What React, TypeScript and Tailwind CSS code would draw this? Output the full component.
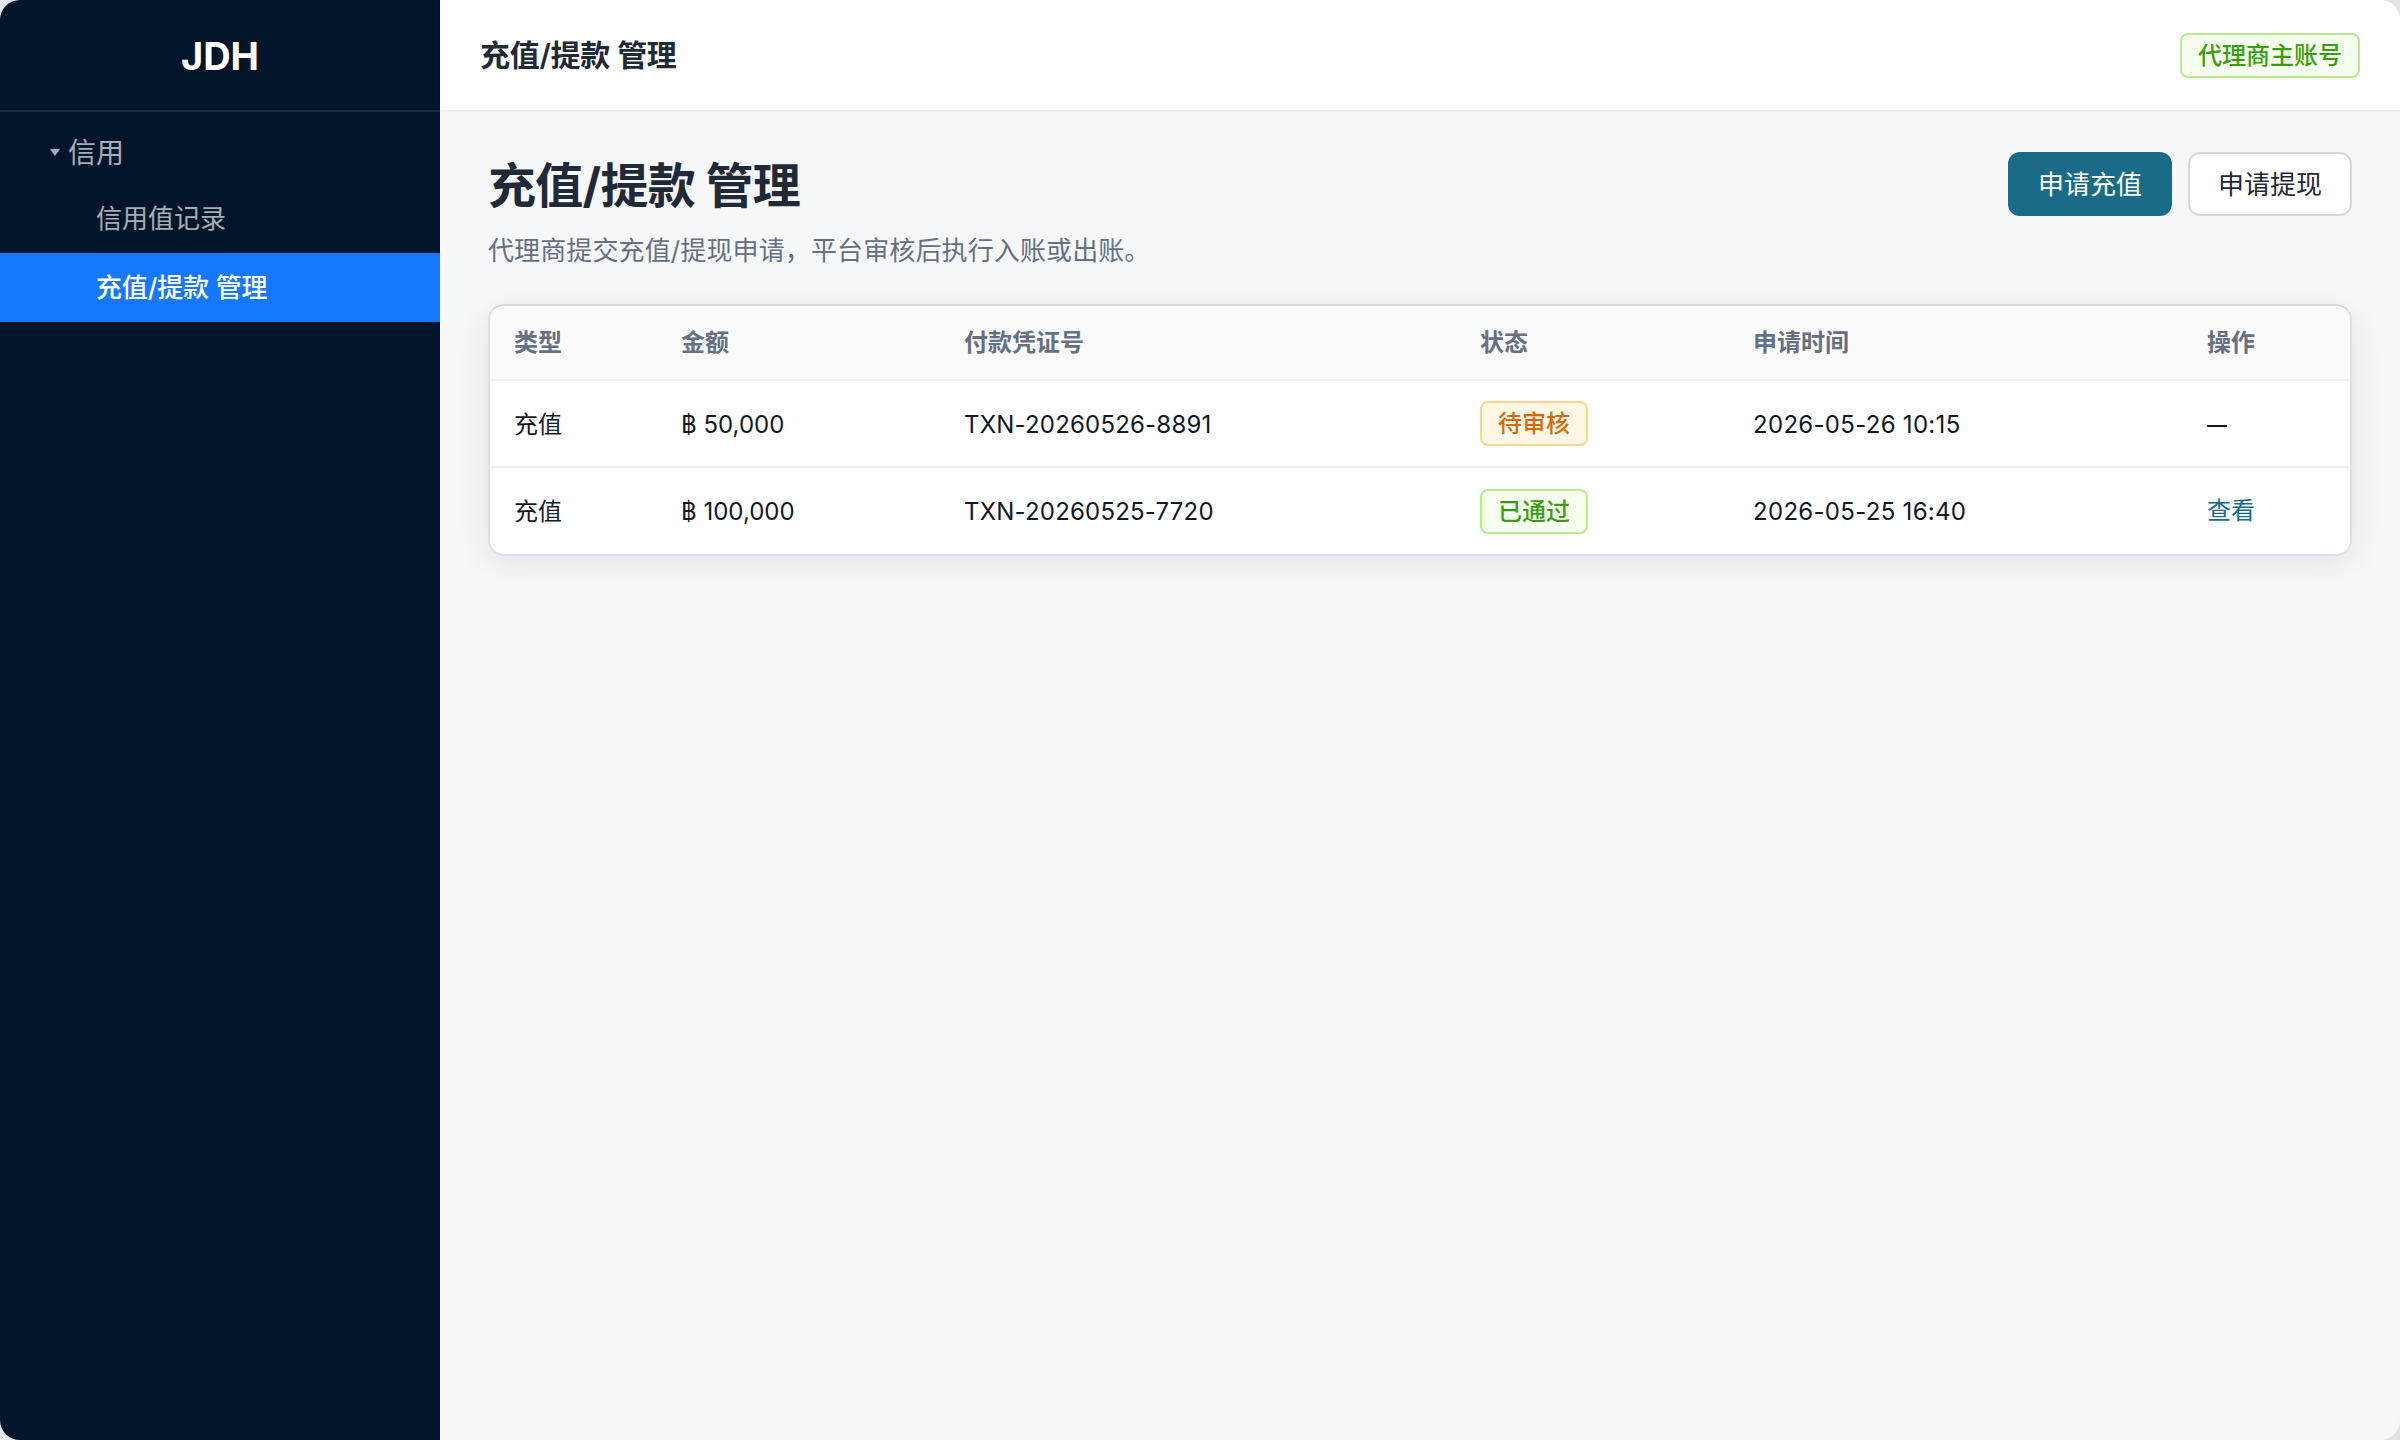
const font = "font-['Inter','Noto_Sans_CJK_SC',sans-serif]";

const rows = [
  { type: '充值', amount: '฿ 50,000', voucher: 'TXN-20260526-8891', status: '待审核', pending: true, time: '2026-05-26 10:15', action: '—' },
  { type: '充值', amount: '฿ 100,000', voucher: 'TXN-20260525-7720', status: '已通过', pending: false, time: '2026-05-25 16:40', action: '查看' },
];

const heads = ['类型', '金额', '付款凭证号', '状态', '申请时间', '操作'];

export default function App() {
  return (
    <div className="h-[1440px] w-[2400px] bg-[#e4e4e4]">
      <div className={`flex h-full w-full overflow-hidden rounded-[20px] bg-[#f6f7f9] ${font}`}>
        {/* Sidebar */}
        <aside className="w-[440px] shrink-0 bg-[#001529]">
          <div className="flex h-[112px] items-center justify-center border-b-2 border-white/10 pt-[2px] text-[38px] font-bold text-white">JDH</div>
          <div className="flex h-[72px] items-center pl-[50px] pt-[9px] text-[28px] text-white/65">
            <span className="mr-[8px] h-0 w-0 border-x-[5px] border-t-[7px] border-x-transparent border-t-white/65" />
            信用
          </div>
          <div className="flex h-[69px] items-center pl-[96px] text-[26px] text-white/65">信用值记录</div>
          <div className="flex h-[69px] items-center bg-[#1677ff] pl-[96px] text-[26px] font-medium tracking-[-0.15px] text-white">充值/提款 管理</div>
        </aside>

        <div className="flex-1">
          {/* Top bar */}
          <header className="flex h-[112px] items-center justify-between border-b-2 border-[#f0f0f0] bg-white pl-[40px] pr-[40px]">
            <h2 className="text-[30px] font-semibold tracking-[-0.3px] text-[#1f2937]">充值/提款 管理</h2>
            <span className="rounded-[8px] border-2 border-[#b7eb8f] bg-[#f6ffed] px-[16px] py-[4px] text-[24px] font-medium leading-[33px] text-[#389e0d]">代理商主账号</span>
          </header>

          <main className="px-[48px]">
            <div className="flex h-[192px] justify-between">
              <div>
                <h1 className="mt-[42px] text-[48px] font-bold leading-[64px] tracking-[-0.75px] text-[#1f2937]">充值/提款 管理</h1>
                <p className="mt-[15px] text-[26px] leading-[36px] tracking-[0.12px] text-[#667085]">代理商提交充值/提现申请，平台审核后执行入账或出账。</p>
              </div>
              <div className="mt-[40px] flex gap-[16px]">
                <button className="h-[64px] w-[164px] rounded-[12px] bg-[#1a6b87] text-[26px] text-white">申请充值</button>
                <button className="h-[64px] w-[164px] rounded-[12px] border-2 border-[#d9d9d9] bg-white text-[26px] text-[#1f2937]">申请提现</button>
              </div>
            </div>

            {/* Records */}
            <div className="overflow-hidden rounded-[16px] border-2 border-[#dde1e7] border-t-[#d6dbe2] bg-white shadow-[0_8px_32px_rgba(0,0,0,0.08)]">
              <table className="w-full table-fixed border-collapse text-left">
                <colgroup>
                  <col className="w-[167px]" />
                  <col className="w-[283px]" />
                  <col className="w-[516px]" />
                  <col className="w-[273px]" />
                  <col className="w-[454px]" />
                  <col />
                </colgroup>
                <thead>
                  <tr className="h-[74px] border-b-2 border-[#f0f0f0] bg-[#fafafa]">
                    {heads.map((h) => (
                      <th key={h} className="px-[24px] text-[24px] font-semibold text-[#667085]">{h}</th>
                    ))}
                  </tr>
                </thead>
                <tbody className="text-[24px] text-[#111827]">
                  {rows.map((r, i) => (
                    <tr key={r.voucher} className={i === 0 ? 'h-[87px] border-b-2 border-[#f0f0f0]' : 'h-[87px]'}>
                      <td className="px-[24px] pt-[2px]">{r.type}</td>
                      <td className="px-[24px] pt-[2px]">{r.amount}</td>
                      <td className="px-[24px] pt-[2px] tracking-[0.2px]">{r.voucher}</td>
                      <td className="px-[24px] pt-[2px]">
                        <span className={r.pending
                          ? 'mb-[2px] inline-block rounded-[8px] border-2 border-[#ffd591] bg-[#fff7e6] px-[16px] py-[4px] font-medium leading-[33px] text-[#d46b08]'
                          : 'mb-[2px] inline-block rounded-[8px] border-2 border-[#b7eb8f] bg-[#f6ffed] px-[16px] py-[4px] font-medium leading-[33px] text-[#389e0d]'}>{r.status}</span>
                      </td>
                      <td className="px-[24px] pt-[2px] tracking-[0.3px]">{r.time}</td>
                      {r.action === '查看'
                        ? <td className="px-[24px] text-[#1a6b87]">{r.action}</td>
                        : <td className="px-[24px] pt-[2px] text-[20px] font-medium">{r.action}</td>}
                    </tr>
                  ))}
                </tbody>
              </table>
            </div>
          </main>
        </div>
      </div>
    </div>
  );
}
